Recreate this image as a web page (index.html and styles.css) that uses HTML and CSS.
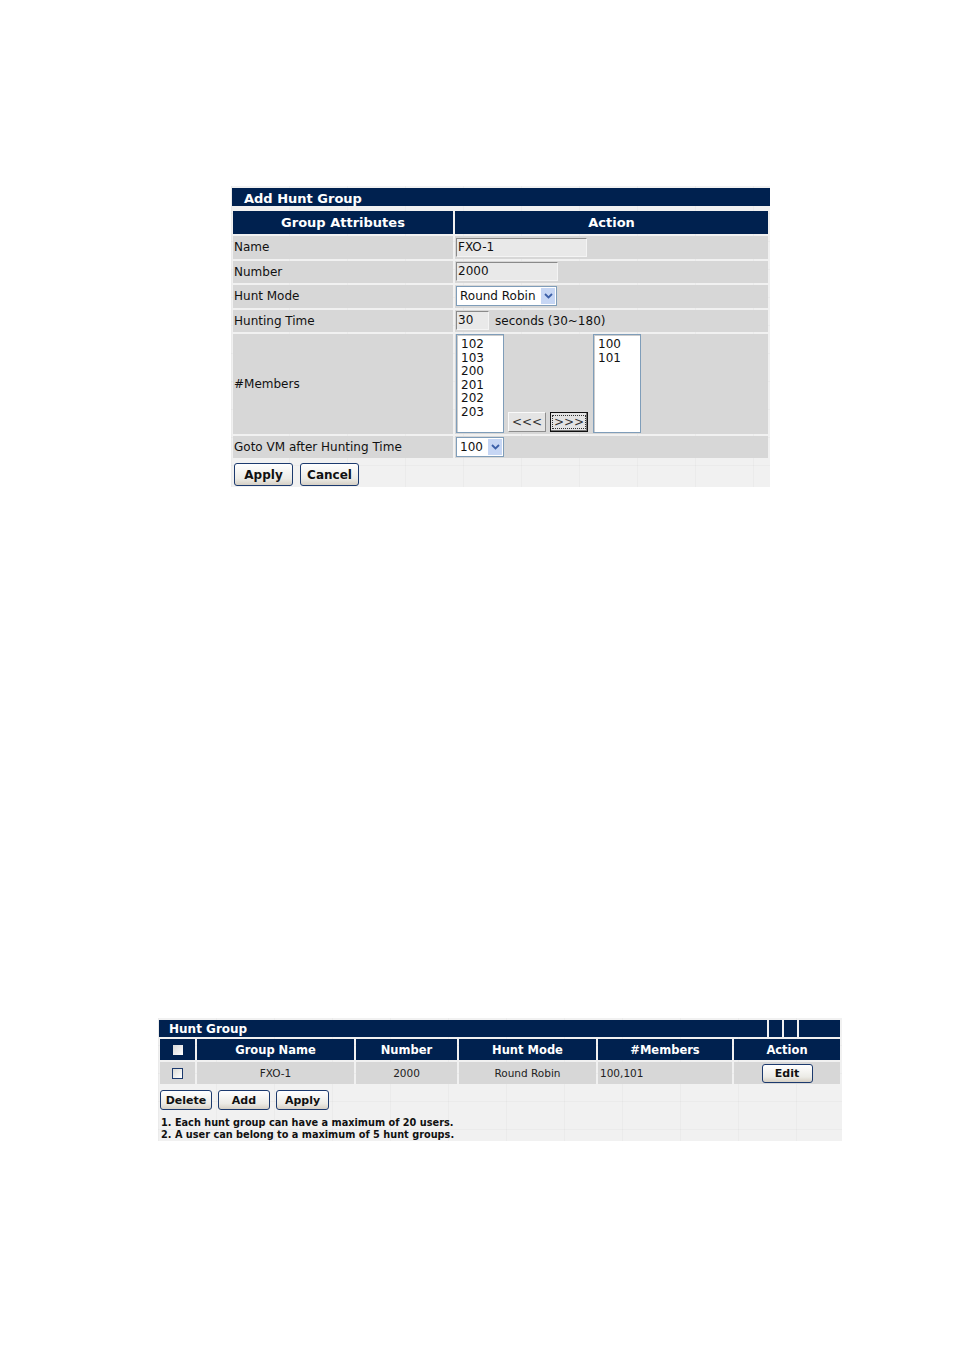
FILE: index.html
```html
<!DOCTYPE html>
<html>
<head>
<meta charset="utf-8">
<link rel="stylesheet" href="styles.css">
</head>
<body>
<div class="page">
  <div class="panel top-panel">
    <div class="titlebar"><span class="title">Add Hunt Group</span></div>
    <table class="form">
      <tr class="hdr"><th class="c1">Group Attributes</th><th class="c2">Action</th></tr>
      <tr><td>Name</td><td><span class="inp inp-name">FXO-1</span></td></tr>
      <tr><td>Number</td><td><span class="inp inp-num">2000</span></td></tr>
      <tr><td>Hunt Mode</td><td><span class="sel sel-mode"><span class="sel-text">Round Robin</span><span class="arrow"><svg width="9" height="6" viewBox="0 0 9 6"><path d="M1 1 L4.5 4.5 L8 1" fill="none" stroke="#3b5fa8" stroke-width="1.8"/></svg></span></span></td></tr>
      <tr><td>Hunting Time</td><td><span class="inp inp-time">30</span><span class="hint">seconds (30~180)</span></td></tr>
      <tr class="members"><td>#Members</td><td>
        <div class="mem">
          <div class="list">102<br>103<br>200<br>201<br>202<br>203</div>
          <div class="movebtns"><span class="mbtn">&lt;&lt;&lt;</span><span class="mbtn focus"><span class="dots">&gt;&gt;&gt;</span></span></div>
          <div class="list">100<br>101</div>
        </div>
      </td></tr>
      <tr><td>Goto VM after Hunting Time</td><td><span class="sel sel-vm"><span class="sel-text">100</span><span class="arrow"><svg width="9" height="6" viewBox="0 0 9 6"><path d="M1 1 L4.5 4.5 L8 1" fill="none" stroke="#3b5fa8" stroke-width="1.8"/></svg></span></span></td></tr>
    </table>
    <div class="btnrow"><span class="btn b-apply">Apply</span><span class="btn b-cancel">Cancel</span></div>
  </div>

  <div class="panel bottom-panel">
    <div class="titlebar2"><div class="t-main">Hunt Group</div><div class="t-s"></div><div class="t-s"></div><div class="t-end"></div></div>
    <table class="list-table">
      <tr class="hdr2">
        <th class="k1"><span class="cb cb-h"></span></th>
        <th class="k2">Group Name</th>
        <th class="k3">Number</th>
        <th class="k4">Hunt Mode</th>
        <th class="k5">#Members</th>
        <th class="k6">Action</th>
      </tr>
      <tr class="row2">
        <td class="center"><span class="cb"></span></td>
        <td class="center">FXO-1</td>
        <td class="center">2000</td>
        <td class="center">Round Robin</td>
        <td class="left">100,101</td>
        <td class="center"><span class="btn2 edit">Edit</span></td>
      </tr>
    </table>
    <div class="btnrow2"><span class="btn2 b-del">Delete</span><span class="btn2 b-add">Add</span><span class="btn2 b-ap">Apply</span></div>
    <div class="notes">
      <div>1. Each hunt group can have a maximum of 20 users.</div>
      <div>2. A user can belong to a maximum of 5 hunt groups.</div>
    </div>
  </div>
</div>
</body>
</html>
```

FILE: styles.css
```css
html, body { margin: 0; padding: 0; background: #ffffff; }
body { font-family: "DejaVu Sans", Verdana, sans-serif; color: #111; }
.page { width: 954px; height: 1351px; padding-top: 186px; box-sizing: border-box; overflow: hidden; }

.panel {
  background-color: #f1f1f1;
  background-image:
    linear-gradient(90deg, rgba(0,0,0,0.025) 1px, transparent 1px),
    linear-gradient(0deg, rgba(0,0,0,0.025) 1px, transparent 1px);
  background-size: 58px 100%, 100% 28px;
}

/* ---------- top panel ---------- */
.top-panel { margin-left: 231px; width: 539px; height: 301px; padding-top: 2px; box-sizing: border-box; }
.titlebar { margin-left: 1px; height: 18px; background: #00214f; display: flex; align-items: center; }
.title { color: #fff; font-weight: bold; font-size: 13px; margin-left: 12px; padding-top: 2px; }

.form { border-collapse: separate; border-spacing: 2px; margin-top: 3px; width: 539px; }
.form td, .form th { padding: 0; }
.form th { background: #00214f; color: #fff; font-size: 13px; font-weight: bold; height: 23px; text-align: center; }
.form .c1 { width: 220px; }
.form td { background: #d7d7d7; font-size: 12px; height: 22.5px; padding-left: 1px; vertical-align: middle; }
.form tr.members td { height: 99.5px; }

.inp { display: inline-block; box-sizing: border-box; height: 19px; background: #e9e9e9; border: 1px solid; border-color: #8a8a8a #f4f4f4 #f4f4f4 #8a8a8a; font-size: 12px; line-height: 17px; padding-left: 1px; vertical-align: middle; }
.inp-name { width: 131px; }
.inp-num { width: 102px; }
.inp-time { width: 33px; }
.hint { font-size: 12px; margin-left: 6px; vertical-align: middle; }

.sel { display: inline-flex; box-sizing: border-box; height: 20px; background: #fff; border: 1px solid #7f9db9; align-items: center; vertical-align: middle; }
.sel-text { font-size: 12px; padding-left: 3px; flex: 1; }
.arrow { width: 14px; height: 16px; background: #c6d6f4; margin-right: 1px; display: flex; align-items: center; justify-content: center; }
.sel-mode { width: 101px; }
.sel-vm { width: 48px; }

.mem { display: flex; align-items: stretch; height: 99px; }
.list { box-sizing: border-box; width: 48px; height: 99px; background: #fff; border: 1px solid #7f9db9; box-shadow: inset 1px 1px 0 #ccc; font-size: 12px; line-height: 13.5px; padding: 3px 0 0 4px; }
.movebtns { display: flex; align-items: flex-end; gap: 4px; margin-left: 4px; margin-right: 5px; padding-bottom: 1px; }
.mbtn { display: inline-flex; align-items: center; justify-content: center; box-sizing: border-box; width: 38px; height: 20px; background: #e4e4e4; border: 1px solid; border-color: #fafafa #8e8e8e #8e8e8e #fafafa; font-size: 12px; color: #333; }
.mbtn.focus { border: 1px solid #111; box-shadow: inset -1px -1px 0 #777; }
.dots { outline: 1px dotted #333; padding: 0 1px; line-height: 12px; }

.btnrow { display: flex; gap: 7px; margin-left: 3px; margin-top: 3px; }
.btn { display: inline-flex; align-items: center; justify-content: center; box-sizing: border-box; height: 23px; background: linear-gradient(#ffffff, #ecebe6 70%, #d6d0c5); border: 1px solid #1c3a6e; border-radius: 3px; font-size: 12px; font-weight: bold; color: #111; }
.b-apply { width: 59px; }
.b-cancel { width: 59px; }

/* ---------- bottom panel ---------- */
.bottom-panel { margin-left: 158px; margin-top: 531px; width: 684px; height: 123px; padding-top: 2px; box-sizing: border-box; }
.titlebar2 { display: flex; gap: 2px; margin-left: 1px; width: 681px; height: 17px; }
.titlebar2 > div { background: #00214f; }
.t-main { flex: 1; color: #fff; font-weight: bold; font-size: 12px; line-height: 18px; padding-left: 10px; }
.t-s { width: 13px; }
.t-end { width: 41px; }

.list-table { border-collapse: separate; border-spacing: 2px; margin-top: 0px; width: 684px; }
.list-table th, .list-table td { padding: 0; }
.list-table th { background: #00214f; color: #fff; font-size: 11.5px; font-weight: bold; height: 21px; text-align: center; }
.k1 { width: 35px; }
.k2 { width: 157px; }
.k3 { width: 101px; }
.k4 { width: 137px; }
.k5 { width: 134px; }
.list-table td { background: #d7d7d7; font-size: 10.5px; height: 22px; color: #222; }
.center { text-align: center; }
.left { text-align: left; padding-left: 2px !important; }

.cb { display: inline-block; width: 11px; height: 11px; box-sizing: border-box; border: 1px solid #1c3a6e; background: linear-gradient(135deg, #dcdcd6, #fff); vertical-align: middle; }
.cb-h { border: none; background: linear-gradient(135deg, #d8d8d8, #ffffff); width: 10px; height: 10px; }

.btn2 { display: inline-flex; align-items: center; justify-content: center; box-sizing: border-box; height: 20px; background: linear-gradient(#ffffff, #ecebe6 70%, #d6d0c5); border: 1px solid #1c3a6e; border-radius: 3px; font-size: 11px; font-weight: bold; color: #111; }
.edit { width: 51px; height: 19px; }
.btnrow2 { display: flex; gap: 6px; margin-left: 2px; margin-top: 4px; }
.b-del { width: 52px; }
.b-add { width: 52px; }
.b-ap { width: 53px; }
.notes { margin-left: 3px; margin-top: 7px; font-size: 9.75px; font-weight: bold; line-height: 12px; color: #111; }
```
